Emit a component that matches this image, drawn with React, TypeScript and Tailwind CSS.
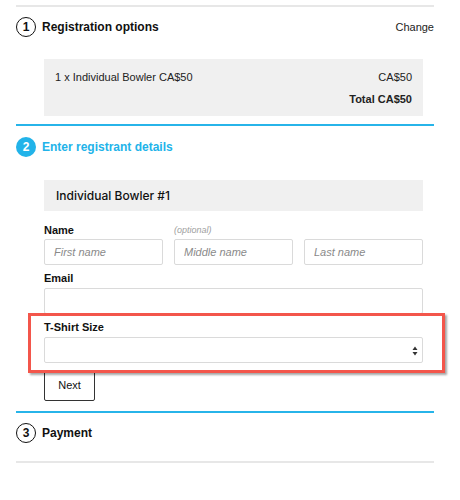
import React from "react";

function StepCircle({ n, active }: { n: number; active?: boolean }) {
  return active ? (
    <div className="flex h-5 w-5 shrink-0 items-center justify-center rounded-full bg-[#22b3e9] text-[12px] font-bold leading-none text-white">
      {n}
    </div>
  ) : (
    <div className="flex h-5 w-5 shrink-0 items-center justify-center rounded-full border-[1.5px] border-[#111] text-[12px] font-bold leading-none text-[#111]">
      {n}
    </div>
  );
}

function TextInput({ placeholder }: { placeholder?: string }) {
  return (
    <input
      type="text"
      placeholder={placeholder}
      className="block h-[26px] w-full rounded-[2px] border border-[#dadada] bg-white px-[9px] text-[11px] italic text-[#333] placeholder:text-[#8a8a8a] outline-none"
    />
  );
}

export default function App() {
  return (
    <div
      className="relative h-[500px] w-[460px] bg-white text-[#111]"
      style={{ fontFamily: '"Liberation Sans", Arial, sans-serif' }}
    >
      <div className="pl-4 pr-[26px] pt-[5px]">
        <div className="h-[2px] bg-[#e7e7e7]" />

        {/* Step 1 */}
        <div className="mt-[10px] flex h-5 items-center justify-between">
          <div className="flex items-center gap-[6px]">
            <StepCircle n={1} />
            <span className="text-[12px] font-bold">Registration options</span>
          </div>
          <span className="text-[11px] text-[#222]">Change</span>
        </div>

        <div className="ml-7 mr-[11px] mt-[22px] h-[57px] bg-[#f0f0f0] px-[11px] pt-[11px] text-[11px] text-[#222]">
          <div className="flex justify-between leading-[14px]">
            <span>1 x Individual Bowler CA$50</span>
            <span>CA$50</span>
          </div>
          <div className="mt-[8px] flex justify-end font-bold leading-[14px]">
            Total CA$50
          </div>
        </div>

        <div className="mt-[8px] h-[2px] bg-[#27b4e9]" />

        {/* Step 2 */}
        <div className="mt-[11px] flex h-5 items-center gap-[6px]">
          <StepCircle n={2} active />
          <span className="text-[12px] font-bold text-[#22b3e9]">Enter registrant details</span>
        </div>

        <div className="ml-7 mr-[11px]">
          <div
            className="mt-[23px] flex h-[31px] items-center bg-[#f0f0f0] pl-3 text-[12px] font-medium text-[#111]"
            style={{ fontFamily: "Inter, sans-serif" }}
          >
            Individual Bowler #1
          </div>

          <div className="mt-[12px] grid grid-cols-3 gap-[11px] leading-[14px]">
            <span className="text-[11px] font-bold">Name</span>
            <span className="text-[9px] italic text-[#a0a0a0]">(optional)</span>
          </div>
          <div className="mt-[2px] grid grid-cols-3 gap-[11px]">
            <TextInput placeholder="First name" />
            <TextInput placeholder="Middle name" />
            <TextInput placeholder="Last name" />
          </div>

          <div className="mt-[6px] text-[11px] font-bold leading-[14px]">Email</div>
          <div className="mt-[3px]">
            <TextInput />
          </div>

          <div className="mt-[6px] text-[11px] font-bold leading-[14px]">T-Shirt Size</div>
          <div className="relative mt-[3px] h-[26px] rounded-[2px] border border-[#dadada] bg-white">
            <svg
              className="absolute right-[4px] top-[8px]"
              width="6"
              height="10"
              viewBox="0 0 6 10"
            >
              <path d="M3 0.5 L5.5 4 L0.5 4 Z" fill="#333" />
              <path d="M3 9.5 L5.5 6 L0.5 6 Z" fill="#333" />
            </svg>
          </div>

          <button className="mt-[7px] flex h-[31px] w-[51px] items-center justify-center rounded-[2px] border border-[#333] bg-white text-[11px] text-[#111]">
            Next
          </button>
        </div>

        <div className="mt-[10px] h-[2px] bg-[#27b4e9]" />

        {/* Step 3 */}
        <div className="mt-[10px] flex h-5 items-center gap-[6px]">
          <StepCircle n={3} />
          <span className="text-[12px] font-bold">Payment</span>
        </div>

        <div className="mt-[18px] h-[2px] bg-[#e7e7e7]" />
      </div>

      {/* Annotation highlight */}
      <div className="pointer-events-none absolute left-[28px] top-[313px] h-[60px] w-[417px] border-[3px] border-[#f3564b] shadow-[2px_2px_2px_rgba(0,0,0,0.35)]" />
    </div>
  );
}
